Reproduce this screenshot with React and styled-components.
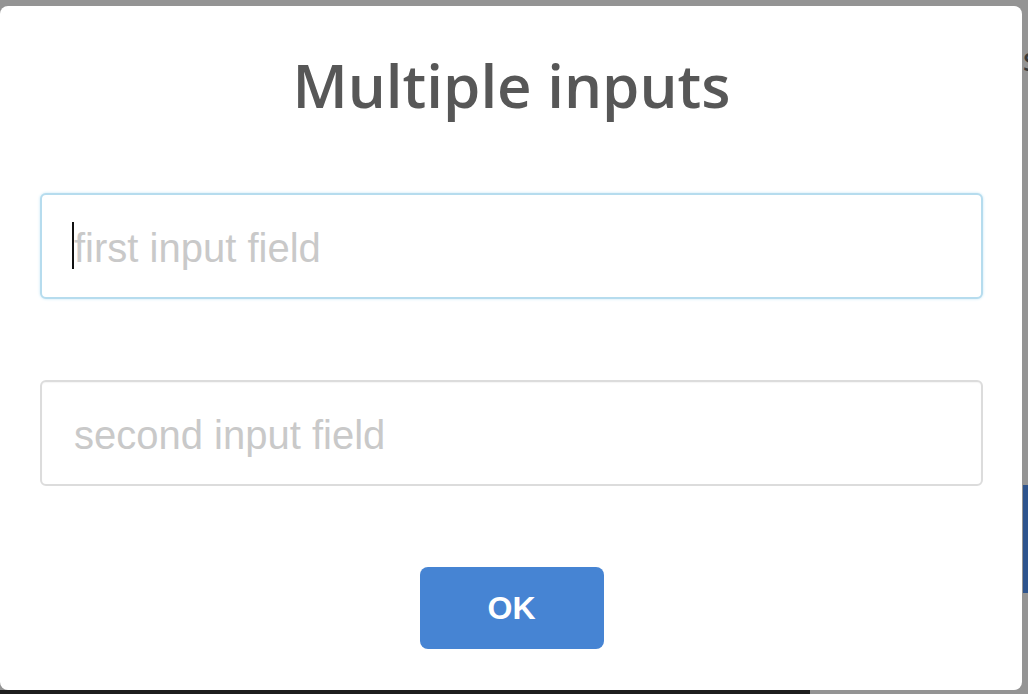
import React from 'react'
import styled, { createGlobalStyle } from 'styled-components'

const GlobalStyle = createGlobalStyle`
    html, body {
        margin: 0;
        padding: 0;
        background: #949494;
    }
    * {
        box-sizing: border-box;
    }
`

const Page = styled.div`
    position: relative;
    width: 1028px;
    height: 694px;
    overflow: hidden;
    background: #949494;
    display: grid;
    grid-template-columns: 1fr 5px;
    grid-template-rows: 1fr 4px;
`

const SideColumn = styled.div`
    grid-column: 2;
    grid-row: 1;
    display: flex;
    flex-direction: column;
    padding-top: 46px;
    overflow: hidden;
`

const SideGlyph = styled.span`
    font-family: "Open Sans", sans-serif;
    font-size: 26px;
    font-weight: 600;
    color: #3a3a3a;
    line-height: 30px;
`

const SideBlock = styled.div`
    margin-top: 409px;
    height: 108px;
    background: #2e548d;
`

const BottomBar = styled.div`
    grid-column: 1 / 3;
    grid-row: 2;
    display: flex;

    & .dark {
        width: 810px;
        background: #1d1d1d;
    }
`

const Overlay = styled.div`
    position: absolute;
    inset: 0;
    padding-top: 6px;
    display: flex;
    align-items: flex-start;
`

const Modal = styled.div`
    width: 1022px;
    height: 684px;
    background: #fff;
    border-radius: 8px;
    padding: 43px 39px 0 40px;
    display: flex;
    flex-direction: column;
    align-items: stretch;
`

const Title = styled.h2`
    margin: 0;
    text-align: center;
    font-family: "Open Sans", sans-serif;
    font-weight: 600;
    font-size: 60px;
    line-height: 72px;
    color: #575757;
`

const Fields = styled.div`
    display: flex;
    flex-direction: column;
    gap: 81px;
    margin-top: 72px;
`

const InputWrap = styled.div`
    position: relative;
`

const Input = styled.input`
    display: block;
    width: 100%;
    height: 106px;
    padding: 4px 32px 0;
    border-radius: 6px;
    border: 2px solid ${props => props.focused ? '#b6dcee' : '#dcdcdc'};
    box-shadow: ${props => props.focused ? '0 0 3px #c4e6f5' : 'inset 0 1px 1px rgba(0,0,0,0.04)'};
    outline: none;
    font-family: "Liberation Sans", Arial, sans-serif;
    font-size: 40px;
    color: #575757;
    caret-color: transparent;

    &::placeholder {
        color: #c9c9c9;
    }
`

const Caret = styled.span`
    position: absolute;
    left: 32px;
    top: 29px;
    width: 2px;
    height: 47px;
    background: #111;
`

const Actions = styled.div`
    display: flex;
    justify-content: center;
    margin-top: 81px;
`

const Button = styled.button`
    width: 184px;
    height: 82px;
    border: none;
    border-radius: 8px;
    background: #4684d3;
    color: #fff;
    font-family: "Liberation Sans", Arial, sans-serif;
    font-weight: 700;
    font-size: 32px;
    cursor: pointer;
`

export default function App() {
    return <>
        <GlobalStyle />
        <Page>
            <SideColumn>
                <SideGlyph>S</SideGlyph>
                <SideBlock />
            </SideColumn>
            <BottomBar>
                <div className="dark" />
            </BottomBar>
            <Overlay>
                <Modal>
                    <Title>Multiple inputs</Title>
                    <Fields>
                        <InputWrap>
                            <Input focused placeholder="first input field" />
                            <Caret />
                        </InputWrap>
                        <InputWrap>
                            <Input placeholder="second input field" />
                        </InputWrap>
                    </Fields>
                    <Actions>
                        <Button>OK</Button>
                    </Actions>
                </Modal>
            </Overlay>
        </Page>
    </>
}
